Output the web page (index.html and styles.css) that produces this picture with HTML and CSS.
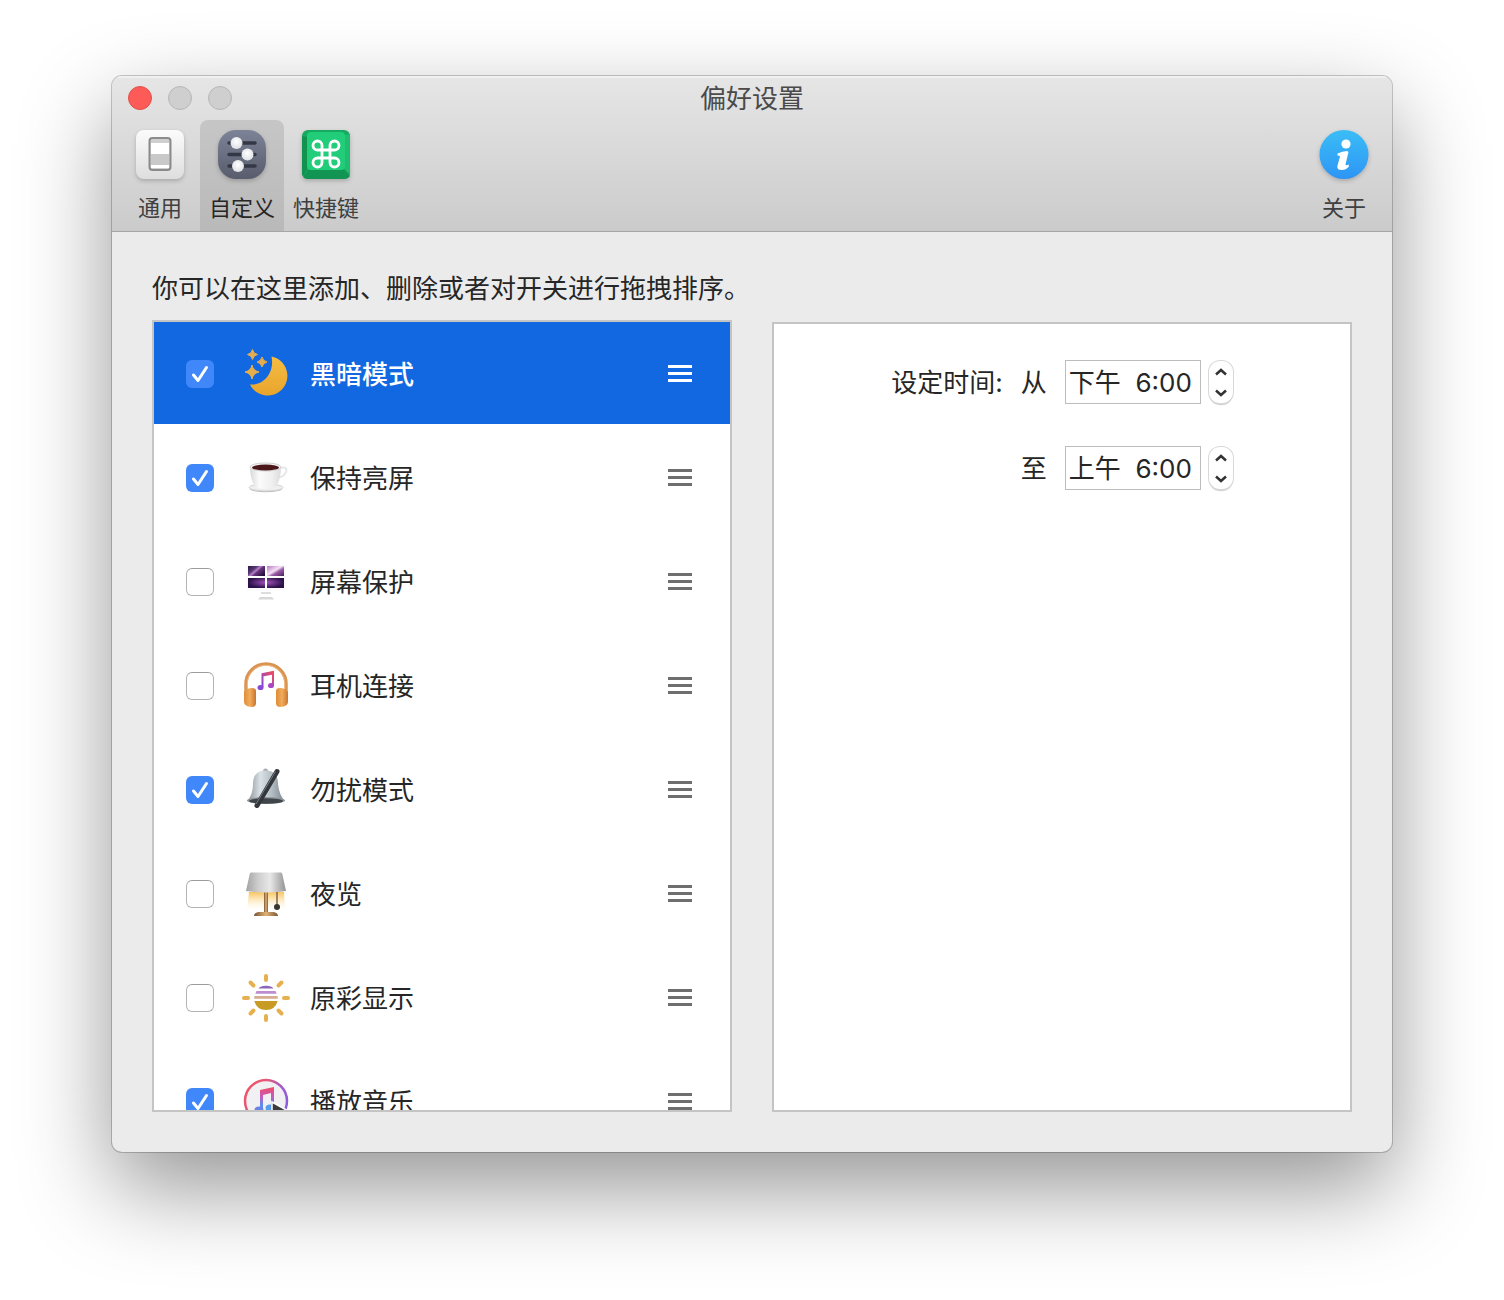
FILE: index.html
```html
<!DOCTYPE html>
<html lang="zh-CN">
<head>
<meta charset="utf-8">
<meta name="viewport" content="width=device-width, initial-scale=1">
<title>偏好设置</title>
<link rel="stylesheet" href="styles.css">
</head>
<body>
<main class="window">
  <header class="chrome">
    <div class="titlebar">
      <div class="lights">
        <button class="light close" aria-label="关闭"></button>
        <button class="light" aria-label="最小化" disabled></button>
        <button class="light" aria-label="缩放" disabled></button>
      </div>
      <h1 class="title">偏好设置</h1>
    </div>
    <nav class="toolbar">
      <button class="tool">
        <svg class="tool-icon" viewBox="0 0 56 56" aria-hidden="true">
          <defs>
            <linearGradient id="plate" x2="0" y2="1"><stop stop-color="#fbfbfb"/><stop offset="1" stop-color="#dedede"/></linearGradient>
          </defs>
          <rect x="4" y="3" width="48" height="49" rx="8" fill="url(#plate)"/>
          <rect x="17.500" y="11" width="21" height="32" rx="3" fill="#cfcfcf" stroke="#8b8b8b" stroke-width="2"/>
          <rect x="19" y="16" width="18" height="11" fill="#fff"/>
          <rect x="19" y="27" width="18" height="11" fill="#c9c9c9"/>
          <rect x="19" y="38" width="18" height="3" fill="#fff"/>
        </svg>
        <span>通用</span>
      </button>
      <button class="tool active" aria-current="page">
        <svg class="tool-icon" viewBox="0 0 56 56" aria-hidden="true">
          <defs>
            <linearGradient id="slate" x2="0" y2="1"><stop stop-color="#7d8397"/><stop offset="1" stop-color="#585c6c"/></linearGradient>
            <radialGradient id="knob" cy=".4"><stop stop-color="#fff"/><stop offset="1" stop-color="#e3e5e8"/></radialGradient>
          </defs>
          <rect x="4" y="3" width="48" height="49" rx="18" fill="url(#slate)"/>
          <g stroke="#343846" stroke-width="3.500" stroke-linecap="round"><path d="M15 16h26M15 27.500h26M15 39h26"/></g>
          <g fill="url(#knob)"><circle cx="22.500" cy="16" r="6"/><circle cx="33.500" cy="27.500" r="6"/><circle cx="24" cy="39" r="6"/></g>
        </svg>
        <span>自定义</span>
      </button>
      <button class="tool">
        <svg class="tool-icon" viewBox="0 0 56 56" aria-hidden="true">
          <rect x="4" y="3" width="48" height="49" rx="6" fill="#16aa60"/>
          <path d="M4 46V9l5 1v33l-5 6z" fill="#11934f"/>
          <path d="M5 49l6-7h35l6 7q-2 3-6 3H10q-4 0-5-3z" fill="#129553"/>
          <path d="M46 8l6-1v40l-6-5z" fill="#20bd70"/>
          <rect x="9" y="5" width="38" height="38" rx="4" fill="#21cd79"/>
          <path d="M24 23h8v8h-8zM24 23h-4.500a4.500 4.500 0 1 1 4.500-4.500zM32 23h4.500a4.500 4.500 0 1 0-4.500-4.500zM24 31h-4.500a4.500 4.500 0 1 0 4.500 4.500zM32 31h4.500a4.500 4.500 0 1 1-4.500 4.500z" fill="none" stroke="#fff" stroke-width="2.800"/>
        </svg>
        <span>快捷键</span>
      </button>
      <button class="tool about">
        <svg class="tool-icon" viewBox="0 0 56 56" aria-hidden="true">
          <defs>
            <linearGradient id="sky" x2="0" y2="1"><stop stop-color="#3bbdf6"/><stop offset="1" stop-color="#2d95f5"/></linearGradient>
          </defs>
          <circle cx="28" cy="27.500" r="24.500" fill="url(#sky)"/>
          <circle cx="30" cy="17" r="4.600" fill="#fff"/>
          <path d="M21.500 26.500q5-2.500 9.500-2.500l1.500 1-3 12.500q0 1.500 3 0l.5 2q-3 3.500-7.500 3.500-5 0-4-4.500l2.500-9q0-1-2.500-1z" fill="#fff"/>
        </svg>
        <span>关于</span>
      </button>
    </nav>
  </header>

  <section class="content">
    <p class="intro">你可以在这里添加、删除或者对开关进行拖拽排序。</p>
    <div class="panels">
      <ul class="switches">
        <li class="row selected">
          <input class="check" type="checkbox" id="dark" checked>
          <svg class="icon" viewBox="0 0 48 48" aria-hidden="true">
            <defs><linearGradient id="gold" x2="0" y2="1"><stop stop-color="#f5bd42"/><stop offset="1" stop-color="#e9a42c"/></linearGradient></defs>
            <path d="M29.500 6.500A19.700 19.700 0 1 1 8 34.500C21 36 33 23 29.500 6.500z" fill="url(#gold)"/>
            <path d="M10.500-.5q1 4.300 5 5-4 .9-5 5-1-4.100-5-5 4-.7 5-5zM20 7q1 4.200 5 5-4 1-5 5-1-4-5-5 4-.8 5-5zM10 15q1.200 5.600 7 7-5.800 1.400-7 7-1.200-5.600-7-7 5.800-1.400 7-7z" fill="#e8ad4b" stroke="#e8ad4b"/>
          </svg>
          <label class="name" for="dark">黑暗模式</label>
          <button class="handle" aria-label="拖拽排序"></button>
        </li>
        <li class="row">
          <input class="check" type="checkbox" id="awake" checked>
          <svg class="icon" viewBox="0 0 48 48" aria-hidden="true">
            <defs><linearGradient id="china"><stop stop-color="#d9d9d9"/><stop offset=".3" stop-color="#fbfbfb"/><stop offset=".7" stop-color="#f0f0f0"/><stop offset="1" stop-color="#dcdcdc"/></linearGradient></defs>
            <ellipse cx="24" cy="35" rx="16" ry="3.200" fill="#bdbdbd"/>
            <ellipse cx="24" cy="33.500" rx="17" ry="3.500" fill="#efefef" stroke="#d4d4d4"/>
            <path d="M38 14q8-2 6 4-2 5-9 6" fill="none" stroke="#e6e6e6" stroke-width="2"/>
            <path d="M8 13q0 11 4 18 2 4 11 4 9 0 12-4 4-7 4-18z" fill="url(#china)"/>
            <ellipse cx="23.500" cy="13" rx="15.500" ry="4" fill="#f7f7f7" stroke="#d0d0d0"/>
            <ellipse cx="23.500" cy="13.500" rx="13.500" ry="3" fill="#4b171b"/>
          </svg>
          <label class="name" for="awake">保持亮屏</label>
          <button class="handle" aria-label="拖拽排序"></button>
        </li>
        <li class="row">
          <input class="check" type="checkbox" id="saver">
          <svg class="icon" viewBox="0 0 48 48" aria-hidden="true">
            <defs>
              <linearGradient id="galaxy" x2="1" y2=".7"><stop stop-color="#241a40"/><stop offset=".35" stop-color="#5a3675"/><stop offset=".5" stop-color="#b583c4"/><stop offset=".6" stop-color="#6b357f"/><stop offset="1" stop-color="#1c0c33"/></linearGradient>
              <linearGradient id="flare" x2="1" y2="1"><stop stop-color="#b273bd"/><stop offset=".45" stop-color="#f6e0f5"/><stop offset=".6" stop-color="#9a5ba6"/><stop offset="1" stop-color="#3b1b4e"/></linearGradient>
              <radialGradient id="nebula"><stop stop-color="#a553bd"/><stop offset="1" stop-color="#2a1148"/></radialGradient>
            </defs>
            <rect x="4" y="6" width="40" height="27" rx="2" fill="#fbfbfb"/>
            <path d="M6 8h18v11H6z" fill="url(#galaxy)"/>
            <path d="M24 8h18v11H24z" fill="url(#flare)"/>
            <path d="M6 19h18v11H6zM24 19h18v11H24z" fill="url(#nebula)"/>
            <path d="M24 8v22M6 19h36" stroke="#fff" stroke-width="2"/>
            <path d="M19 34h10v2H19z" fill="#ddd"/><path d="M18 39h12l2 2.500H16z" fill="#d8d8d8"/>
          </svg>
          <label class="name" for="saver">屏幕保护</label>
          <button class="handle" aria-label="拖拽排序"></button>
        </li>
        <li class="row">
          <input class="check" type="checkbox" id="phones">
          <svg class="icon" viewBox="0 0 48 48" aria-hidden="true">
            <defs>
              <linearGradient id="amber"><stop stop-color="#e08c36"/><stop offset=".5" stop-color="#f0ac5c"/><stop offset="1" stop-color="#c9742f"/></linearGradient>
              <linearGradient id="tune" x1="1" x2="0" y2="1"><stop stop-color="#f24b5a"/><stop offset="1" stop-color="#7d49df"/></linearGradient>
            </defs>
            <path d="M4 34V22a20 20 0 0 1 40 0v12" fill="none" stroke="#da9452" stroke-width="3.500"/>
            <path d="M5.300 30v-8a18.700 18.700 0 0 1 37.400 0v8" fill="none" stroke="#f1bd85"/>
            <path d="M2 30q3-4 8-4 4 0 4 3v12q0 4-4 4-9 0-8-7z" fill="url(#amber)"/>
            <path d="M46 30q-3-4-8-4-4 0-4 3v12q0 4 4 4 9 0 8-7z" fill="url(#amber)"/>
            <path d="M20.500 25V12l10.500-2v13M20.500 13.500l10.500-2" fill="none" stroke="url(#tune)" stroke-width="2"/>
            <ellipse cx="18.500" cy="25.500" rx="3" ry="2.600" fill="#8a48d4"/><ellipse cx="29" cy="23.500" rx="3" ry="2.600" fill="#a848c5"/>
          </svg>
          <label class="name" for="phones">耳机连接</label>
          <button class="handle" aria-label="拖拽排序"></button>
        </li>
        <li class="row">
          <input class="check" type="checkbox" id="dnd" checked>
          <svg class="icon" viewBox="0 0 48 48" aria-hidden="true">
            <defs><linearGradient id="steel"><stop stop-color="#858d94"/><stop offset=".35" stop-color="#dbe2e7"/><stop offset=".65" stop-color="#b3bdc4"/><stop offset="1" stop-color="#7d858b"/></linearGradient></defs>
            <circle cx="23.500" cy="5" r="2.500" fill="#a5acb1"/>
            <path d="M5 35q6-6 6-17Q11 4.500 23.500 4.500T36 18q1 11 7 17z" fill="url(#steel)"/>
            <ellipse cx="24" cy="34.500" rx="19" ry="3.500" fill="#8f969b"/><ellipse cx="24" cy="35" rx="17" ry="2.800" fill="#40454a"/>
            <path d="M15 39.500L35 5.500" stroke="#33363a" stroke-width="5" stroke-linecap="round"/><path d="M14 38L33.500 5.500" stroke="#777c80"/>
          </svg>
          <label class="name" for="dnd">勿扰模式</label>
          <button class="handle" aria-label="拖拽排序"></button>
        </li>
        <li class="row">
          <input class="check" type="checkbox" id="night">
          <svg class="icon" viewBox="0 0 48 48" aria-hidden="true">
            <defs>
              <linearGradient id="shade"><stop stop-color="#a2a2a2"/><stop offset=".3" stop-color="#cdcdcd"/><stop offset=".6" stop-color="#e8e8e8"/><stop offset="1" stop-color="#929292"/></linearGradient>
              <linearGradient id="glow" x2="0" y2="1"><stop stop-color="#f9c45f"/><stop offset="1" stop-color="#fff1d0" stop-opacity="0"/></linearGradient>
              <linearGradient id="brass"><stop stop-color="#775333"/><stop offset=".5" stop-color="#dfb275"/><stop offset="1" stop-color="#7d5938"/></linearGradient>
            </defs>
            <path d="M7 22h35l1 18H5z" fill="url(#glow)"/>
            <rect x="22" y="22" width="4" height="21" fill="url(#brass)"/>
            <path d="M16 42h16q4 1 4 4H12q0-3 4-4z" fill="url(#brass)"/>
            <path d="M9 2.500h30q1 0 1.300 1.500L44 21q-20 3-40 0L7.700 4q.3-1.500 1.300-1.500z" fill="url(#shade)"/>
            <path d="M35 22v13" stroke="#806443" stroke-width="1.500"/><circle cx="35" cy="37" r="3" fill="#393531"/>
          </svg>
          <label class="name" for="night">夜览</label>
          <button class="handle" aria-label="拖拽排序"></button>
        </li>
        <li class="row">
          <input class="check" type="checkbox" id="tone">
          <svg class="icon" viewBox="0 0 48 48" aria-hidden="true">
            <g stroke="#e5b04d" stroke-width="4" stroke-linecap="round"><path d="M24 2v4M24 42v4M2 24h4M42 24h4M8.500 8.500l3 3M36.500 36.500l3 3M39.500 8.500l-3 3M11.500 36.500l-3 3"/></g>
            <path d="M18 13q6-2.500 12 0l1.500 1.500h-15z" fill="#8d65bd"/>
            <path d="M14.500 17h19l1.200 2.800H13.300z" fill="#bd8dcf"/>
            <path d="M12.300 22h23.400v2.800H12.300z" fill="#d6ad91"/>
            <path d="M12.300 27h23.400q-2.500 9-11.700 9t-11.700-9z" fill="#c79b24"/>
          </svg>
          <label class="name" for="tone">原彩显示</label>
          <button class="handle" aria-label="拖拽排序"></button>
        </li>
        <li class="row">
          <input class="check" type="checkbox" id="music" checked>
          <svg class="icon" viewBox="0 0 48 48" aria-hidden="true">
            <defs>
              <linearGradient id="ring" x2="1" y2=".6"><stop stop-color="#f2505f"/><stop offset=".4" stop-color="#e35a79"/><stop offset=".7" stop-color="#a259c6"/><stop offset="1" stop-color="#8a5ce0"/></linearGradient>
              <linearGradient id="note" x2="0" y2="1"><stop stop-color="#f04d62"/><stop offset=".4" stop-color="#c95abb"/><stop offset=".8" stop-color="#5a8cf0"/></linearGradient>
            </defs>
            <circle cx="24" cy="23" r="21" fill="#f1f0f3" stroke="url(#ring)" stroke-width="2.500"/>
            <path d="M18 12l14-3v22h-3V15l-8 2v15h-3z" fill="url(#note)"/>
            <ellipse cx="17" cy="32" rx="4.500" ry="3.500" fill="#6b83e4"/><ellipse cx="28" cy="30" rx="4.500" ry="3.500" fill="#589cf0"/>
            <path d="M30 24l18 10-18 9z" fill="#3c3c3f" stroke="#fff" stroke-width="1.500"/>
          </svg>
          <label class="name" for="music">播放音乐</label>
          <button class="handle" aria-label="拖拽排序"></button>
        </li>
      </ul>

      <form class="detail">
        <div class="times">
          <span class="caption">设定时间:</span>
          <label class="edge" for="from">从</label>
          <input class="time" id="from" type="text" value="下午  6:00">
          <span class="stepper">
            <button type="button" class="step" aria-label="增加"><svg viewBox="0 0 14 8"><path d="M2 6.500l5-4.500 5 4.500"/></svg></button>
            <button type="button" class="step" aria-label="减少"><svg viewBox="0 0 14 8"><path d="M2 1.500l5 4.500 5-4.500"/></svg></button>
          </span>
          <label class="edge" for="to">至</label>
          <input class="time" id="to" type="text" value="上午  6:00">
          <span class="stepper">
            <button type="button" class="step" aria-label="增加"><svg viewBox="0 0 14 8"><path d="M2 6.500l5-4.500 5 4.500"/></svg></button>
            <button type="button" class="step" aria-label="减少"><svg viewBox="0 0 14 8"><path d="M2 1.500l5 4.500 5-4.500"/></svg></button>
          </span>
        </div>
      </form>
    </div>
  </section>
</main>
</body>
</html>
```
FILE: styles.css
```css
* {
  box-sizing: border-box;
}

body {
  margin: 0;
  height: 100vh;
  padding: 76px 112px 148px;
  background: #fff;
  color: #262626;
  font: 26px/36px Inter, "Noto Sans CJK SC", sans-serif;
}

button,
input {
  margin: 0;
  padding: 0;
  border: 0;
  background: none;
  color: inherit;
  font: inherit;
}

.window {
  display: flex;
  flex-direction: column;
  height: 100%;
  overflow: hidden;
  border-radius: 10px;
  background: #ebebeb;
  box-shadow: 0 0 0 1px rgba(0, 0, 0, 0.2), 0 36px 90px rgba(0, 0, 0, 0.42);
}

.chrome {
  border-bottom: 1px solid #a6a6a6;
  background: linear-gradient(#e6e6e6, #cbcbcb);
  box-shadow: inset 0 2px #f0f0f0;
}

.titlebar {
  display: grid;
  grid-template-columns: 1fr auto 1fr;
  align-items: center;
  height: 44px;
  padding: 0 16px;
}

.lights {
  display: flex;
  gap: 16px;
}

.light {
  width: 24px;
  height: 24px;
  border: 1px solid #b6b6b6;
  border-radius: 50%;
  background: #cfcfcf;
}

.close {
  border-color: #e2504b;
  background: #fc5b57;
}

.title {
  margin: 0;
  padding-top: 2px;
  color: #4a4a4a;
  font-size: 26px;
  font-weight: 400;
}

.toolbar {
  display: flex;
  padding: 0 8px;
}

.tool {
  display: flex;
  flex-direction: column;
  align-items: center;
  gap: 9px;
  min-width: 80px;
  height: 111px;
  padding: 7px 9px 0;
  border-radius: 8px 8px 0 0;
  color: #404040;
  font-size: 22px;
  line-height: 32px;
}

.tool.active {
  background: linear-gradient(#c6c6c6, #b9b9b9);
  color: #262626;
}

.about {
  margin-left: auto;
}

.tool-icon {
  width: 56px;
  height: 56px;
  filter: drop-shadow(0 2px 2px rgba(0, 0, 0, 0.2));
}

.content {
  display: flex;
  flex: 1;
  flex-direction: column;
  min-height: 0;
  padding: 39px 40px 40px;
}

.intro {
  margin: 0 0 13px;
}

.panels {
  display: grid;
  flex: 1;
  grid-template-columns: 1fr 1fr;
  grid-template-rows: 100%;
  gap: 40px;
  min-height: 0;
}

.switches,
.detail {
  border: 2px solid #c4c4c4;
  background: #fff;
}

.switches {
  display: flex;
  flex-direction: column;
  gap: 2px;
  margin: 0;
  padding: 0;
  overflow-y: auto;
  list-style: none;
  scrollbar-width: none;
}

.row {
  display: flex;
  flex: none;
  align-items: center;
  height: 102px;
  padding: 2px 38px 0 32px;
}

.selected {
  background: #1268e0;
  color: #fff;
  font-weight: 500;
}

.check {
  appearance: none;
  width: 28px;
  height: 28px;
  border: 1px solid #b4b4b4;
  border-top-color: #9c9c9c;
  border-radius: 6px;
  background: #fff;
}

.check:checked {
  border: 0;
  background: #4087f9 url("data:image/svg+xml,%3Csvg xmlns='http://www.w3.org/2000/svg' viewBox='0 0 28 28'%3E%3Cpath d='M7.500 15l4.500 5.500 8.500-13' fill='none' stroke='white' stroke-width='3' stroke-linecap='round' stroke-linejoin='round'/%3E%3C/svg%3E");
}

.icon {
  width: 48px;
  height: 48px;
  margin: 0 20px 0 28px;
  overflow: visible;
}

.name {
  flex: 1;
  padding-top: 2px;
}

.handle {
  width: 24px;
  height: 17px;
  margin-bottom: 1px;
  border: solid #6e6e6e;
  border-width: 3px 0;
  background: linear-gradient(#6e6e6e, #6e6e6e) center / 100% 3px no-repeat;
}

.selected .handle {
  border-color: #fff;
  background-image: linear-gradient(#fff, #fff);
}

.detail {
  margin-top: 2px;
  padding-top: 36px;
}

.times {
  display: grid;
  grid-template-columns: repeat(4, auto);
  align-items: center;
  justify-content: center;
  row-gap: 42px;
}

.caption,
.edge {
  padding: 2px 18px 0 0;
}

.edge {
  grid-column: 2;
}

.time {
  width: 136px;
  height: 44px;
  padding: 0 3px 4px;
  border: 1px solid #bcbcbc;
}

.stepper {
  display: flex;
  flex-direction: column;
  width: 24px;
  height: 42px;
  margin-left: 8px;
  border-radius: 11px;
  background: #fff;
  box-shadow: 0 0 0 1px #d8d8d8, 0 2px 1px #ccc;
}

.step {
  display: flex;
  flex: 1;
  align-items: center;
  justify-content: center;
}

.step svg {
  width: 14px;
  height: 8px;
  fill: none;
  stroke: #333;
  stroke-width: 2.5px;
}
```
